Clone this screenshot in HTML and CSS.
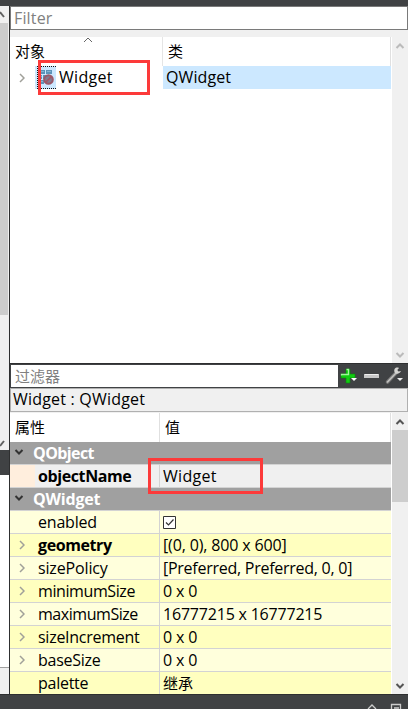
FILE: index.html
```html
<!DOCTYPE html>
<html lang="zh">
<head>
<meta charset="utf-8">
<title>Widget</title>
<link rel="stylesheet" href="styles.css">
</head>
<body>
<svg class="defs" width="0" height="0">
  <symbol id="right" viewBox="0 0 6 10"><path d="M1 1L5 5L1 9" fill="none" stroke="currentColor" stroke-width="1.5"/></symbol>
  <symbol id="down" viewBox="0 0 10 6"><path d="M1.500 1L5 4.500L8.500 1" fill="none" stroke="currentColor" stroke-width="2"/></symbol>
  <symbol id="up" viewBox="0 0 10 6"><path d="M1.500 5L5 1.500L8.500 5" fill="none" stroke="currentColor" stroke-width="2"/></symbol>
</svg>
<div class="app">
  <aside class="side">
    <div class="side-scroll">
      <svg class="side-up" width="5" height="8"><path d="M0 1L4 6" fill="none" stroke="#606060" stroke-width="2"/></svg>
      <div class="side-thumb"></div>
      <svg class="side-down" width="5" height="8"><path d="M0 6L4 1" fill="none" stroke="#606060" stroke-width="2"/></svg>
    </div>
    <div class="side-bar"></div>
    <div class="side-page"></div>
    <div class="side-foot"></div>
  </aside>
  <main class="main">
    <div class="filter"><span class="t-filter">Filter</span></div>
    <section class="objects">
      <div class="tree">
        <div class="tree-head">
          <div class="name"><span>对象</span><svg class="sort" width="10" height="6"><path d="M1 5L5 1L9 5" fill="none" stroke="#666"/></svg></div>
          <div class="kind">类</div>
        </div>
        <div class="tree-row">
          <div class="item">
            <svg class="chev" width="6" height="10"><use href="#right"/></svg>
            <svg class="widget-icon" width="21" height="23" viewBox="0 0 21 23">
              <path fill="#cce8ff" d="M0 0h21v23H0z"/>
              <path fill="#5b93b8" d="M5 4h5v4H5zM11 4h6v4h-6zM3 9h4v4H3zM8 9h6v4H8zM4 14h5v4H4z"/>
              <path fill="#84b5d5" d="M6 5h3v1H6zM12 5h4v1h-4zM4 10h3v1H4zM5 15h3v1H5z"/>
              <circle cx="13.5" cy="13.5" r="4.3" fill="#807b91" stroke="#9b5868" stroke-width="2"/>
              <path d="M10.500 16.500L16.500 10.500" stroke="#a35564" stroke-width="1.6"/>
              <path d="M2 .5H21M2 22.500H21M2.500 0V23" fill="none" stroke="#111" stroke-dasharray="1 1"/>
            </svg>
            <span class="t-widget">Widget</span>
          </div>
          <div class="class-name"><span class="t-qwidget">QWidget</span></div>
        </div>
        <div class="mark mark-top"></div>
      </div>
      <div class="scroll muted"><svg width="10" height="6"><use href="#up"/></svg><svg width="10" height="6"><use href="#down"/></svg></div>
    </section>
    <div class="tools">
      <div class="prop-filter">过滤器</div>
      <svg width="69" height="24" viewBox="0 0 69 24">
        <path d="M8 5h4v5h5v4h-5v5H8v-5H3v-4h5z" fill="#12cc12" stroke="#078b0b" stroke-width=".6"/>
        <path d="M8.500 5.500h2v5H3.500v1" fill="none" stroke="#a2f59d" stroke-width="1.3"/>
        <path d="M13 14h6l-3 3z" fill="#fff"/>
        <path d="M26 10h15v4H26z" fill="#c8c8c8"/><path d="M27 10.500h13" stroke="#efefef"/>
        <path d="M49.500 18L58 9" stroke="#777" stroke-width="3.6" stroke-linecap="round"/>
        <path d="M49.500 18L58 9" stroke="#c2c2bf" stroke-width="1.6" stroke-linecap="round"/>
        <path d="M61 4c-3-1.500-5.500 1-4.500 4 1 2.500 5 2.500 6.500-1l-2.500.5-1.200-1.500z" fill="#d5d5d2"/>
        <path d="M59 14h6l-3 3z" fill="#eee"/>
      </svg>
    </div>
    <div class="caption"><span class="t-caption">Widget : QWidget</span></div>
    <section class="props">
      <div class="table">
        <div class="prop-head"><div class="key">属性</div><div class="val">值</div></div>
        <div class="row group"><svg class="open" width="10" height="6"><use href="#down"/></svg><span class="t-qobject">QObject</span></div>
        <div class="row current"><div class="key"><b class="t-objname">objectName</b></div><div class="val"><span class="t-widget">Widget</span></div></div>
        <div class="row group"><svg class="open" width="10" height="6"><use href="#down"/></svg><span class="t-group2">QWidget</span></div>
        <div class="row light"><div class="key"><span class="t-enabled">enabled</span></div><div class="val"><svg width="13" height="13"><path d="M.5.5h12v12H.5z" fill="#fff" stroke="#333"/><path d="M3 6.500L5.500 9L10.500 3.500" fill="none" stroke="#333" stroke-width="1.2"/></svg></div></div>
        <div class="row deep"><div class="key"><svg class="chev" width="6" height="10"><use href="#right"/></svg><b class="t-geometry">geometry</b></div><div class="val"><span class="t-rect">[(0, 0), 800 x 600]</span></div></div>
        <div class="row light"><div class="key"><svg class="chev" width="6" height="10"><use href="#right"/></svg><span class="t-policy">sizePolicy</span></div><div class="val"><span class="t-pref">[Preferred, Preferred, 0, 0]</span></div></div>
        <div class="row deep"><div class="key"><svg class="chev" width="6" height="10"><use href="#right"/></svg><span class="t-min">minimumSize</span></div><div class="val"><span class="t-zero">0 x 0</span></div></div>
        <div class="row light"><div class="key"><svg class="chev" width="6" height="10"><use href="#right"/></svg><span class="t-max">maximumSize</span></div><div class="val"><span class="t-big">16777215 x 16777215</span></div></div>
        <div class="row deep"><div class="key"><svg class="chev" width="6" height="10"><use href="#right"/></svg><span class="t-inc">sizeIncrement</span></div><div class="val"><span class="t-zero">0 x 0</span></div></div>
        <div class="row light"><div class="key"><svg class="chev" width="6" height="10"><use href="#right"/></svg><span class="t-base">baseSize</span></div><div class="val"><span class="t-zero">0 x 0</span></div></div>
        <div class="row deep"><div class="key"><span class="t-palette">palette</span></div><div class="val">继承</div></div>
        <div class="mark mark-prop"></div>
      </div>
      <div class="scroll active"><svg width="10" height="6"><use href="#up"/></svg><div class="thumb"></div><svg width="10" height="6"><use href="#down"/></svg></div>
    </section>
  </main>
</div>
<footer class="status"><svg width="48" height="14"><path d="M8 6L12 2L16 6" fill="none" stroke="#ccc" stroke-width="1.3"/><path d="M31.500 1.500h9v10h-9z" fill="none" stroke="#ccc" stroke-width="1.3"/><path d="M34 5h5" stroke="#ccc" stroke-width="1.5"/></svg></footer>
</body>
</html>
```
FILE: styles.css
```css
* { box-sizing: border-box; }
body {
  margin: 0;
  width: 408px;
  height: 709px;
  overflow: hidden;
  background: #404244;
  color: #000;
  font: 15px/22px "Open Sans", "Noto Sans CJK SC", sans-serif;
  white-space: nowrap;
}
svg { display: block; flex: none; }
span[class], b { font-size: 16px; }
.defs { position: absolute; }
.app { display: flex; height: 694px; padding-top: 6px; }
.side { width: 9px; display: flex; flex-direction: column; }
.side-scroll { height: 444px; background: #f0f0f0; display: flex; flex-direction: column; padding: 5px 0 2px; }
.side-thumb { width: 8px; height: 292px; margin-top: 4px; background: #cdcdcd; }
.side-down { margin-top: auto; }
.side-bar { height: 25px; background: #404244; }
.side-page { flex: 1; background: #fff; border-bottom: 1px solid #a0a0a0; }
.side-foot { height: 26px; background: #f0f0f0; }
.main { width: 399px; display: flex; flex-direction: column; border-left: 1px solid #2e2f30; background: #f0f0f0; }
.main > * { flex: none; }
.filter { height: 24px; border: 1px solid #7a7a7a; background: #fff; padding-left: 3px; color: #808080; line-height: 23px; }
.objects { display: flex; height: 326px; margin-top: 7px; }
.tree { position: relative; width: 382px; background: #fff; }
.tree-head { display: flex; height: 29px; line-height: 28px; width: 381px; border-right: 1px solid #e0e0e0; }
.name { display: flex; width: 153px; padding-left: 5px; border-right: 1px solid #e5e5e5; }
.sort { margin-left: 38px; }
.kind { padding-left: 5px; }
.tree-row { display: flex; height: 23px; }
.item { display: flex; align-items: center; width: 153px; }
.item span { margin-top: -1px; }
.chev { margin-left: 9px; color: #a0a09a; }
.widget-icon { margin-left: 10px; margin-right: 3px; }
.class-name { width: 228px; background: #cce8ff; padding-left: 3px; }
.mark { position: absolute; border: 3px solid #fc3a3a; }
.mark-top { left: 28px; top: 23px; width: 112px; height: 35px; }
.scroll { flex: 1; display: flex; flex-direction: column; align-items: center; background: #f0f0f0; padding: 6px 0 5px; }
.scroll svg:last-child { margin-top: auto; }
.muted { color: #bbb; }
.active { color: #555; }
.thumb { width: 16px; height: 72px; margin-top: 5px; background: #cdcdcd; }
.tools { display: flex; height: 25px; background: #404244; border-top: 1px solid #2e2f30; }
.prop-filter { width: 328px; height: 22px; margin-top: 1px; padding-left: 4px; border-left: 1px solid #404244; background: #fff; color: #808080; line-height: 22px; }
.caption { height: 24px; border: 1px solid #b0b0b0; padding-left: 2px; line-height: 21px; }
.props { display: flex; height: 281px; margin-top: 1px; }
.table { position: relative; width: 382px; overflow: hidden; background: #fff; }
.prop-head { display: flex; height: 29px; width: 381px; line-height: 29px; border-right: 1px solid #e0e0e0; }
.prop-head .key { width: 150px; padding-left: 5px; border-right: 1px solid #e0e0e0; }
.prop-head .val { padding-left: 5px; }
.row { display: flex; width: 381px; height: 23px; border-bottom: 1px solid #d3d3d3; }
.row .key { display: flex; align-items: center; width: 150px; border-right: 1px solid #d3d3d3; padding-left: 28px; }
.row .key .chev { margin-left: -19px; margin-right: 13px; }
.row .val { display: flex; align-items: center; padding-left: 3px; }
.group { align-items: center; background: #a0a0a0; color: #fff; font-weight: 700; }
.open { margin: -3px 9px 0 4px; color: #333; }
.current { background: linear-gradient(to right, #ffeedd 25px, #f0f0f0 25px); }
.light { background: #ffffdc; }
.deep { background: #ffffbf; }
.mark-prop { left: 138px; top: 45px; width: 115px; height: 36px; }
.status { display: flex; justify-content: flex-end; height: 15px; border-top: 1px solid #2e2f30; background: #404244; padding-top: 8px; overflow: hidden; }

/* tracking */
.t-filter { letter-spacing: .15px; }
.t-widget { letter-spacing: .3px; }
.t-qwidget { letter-spacing: .1px; }
.t-caption { letter-spacing: .2px; }
.t-qobject { letter-spacing: -.6px; }
.t-group2 { letter-spacing: -.2px; }
.t-objname, .t-geometry, .t-min { letter-spacing: -.4px; }
.t-max { letter-spacing: -.45px; }
.t-enabled, .t-big { letter-spacing: -.2px; }
.t-rect, .t-policy, .t-zero { letter-spacing: -.15px; }
.t-pref, .t-inc, .t-base, .t-palette { letter-spacing: -.26px; }
```
